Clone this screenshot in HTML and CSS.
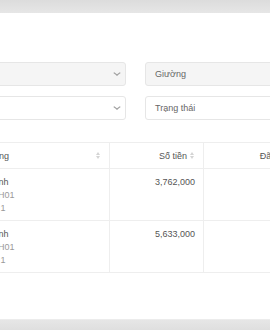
FILE: index.html
```html
<!DOCTYPE html>
<html>
<head>
<meta charset="utf-8">
<link rel="stylesheet" href="styles.css">
</head>
<body>
<div class="band top"></div>
<div class="card">
  <div class="wrap">
    <div class="filters">
      <div class="field select filled"><span class="val"></span><span class="chev"></span></div>
      <div class="field filled"><span class="ph">Giường</span></div>
      <div class="field select"><span class="val"></span><span class="chev"></span></div>
      <div class="field"><span class="ph">Trạng thái</span></div>
    </div>
    <table class="tbl">
      <colgroup><col class="c1"><col class="c2"><col class="c3"><col></colgroup>
      <thead>
        <tr>
          <th class="left"><div class="th-in"><span>Phòng</span><span class="sort"></span></div></th>
          <th class="right"><div class="th-in end"><span>Số tiền</span><span class="sort"></span></div></th>
          <th class="center">Đã thanh toán</th>
          <th></th>
        </tr>
      </thead>
      <tbody>
        <tr>
          <td class="left"><div class="main">Thanh</div><div class="sub">Mã H01</div><div class="sub">Lầu 1</div></td>
          <td class="right num">3,762,000</td>
          <td></td><td></td>
        </tr>
        <tr>
          <td class="left"><div class="main">Thanh</div><div class="sub">Mã H01</div><div class="sub">Lầu 1</div></td>
          <td class="right num">5,633,000</td>
          <td></td><td></td>
        </tr>
      </tbody>
    </table>
  </div>
</div>
<div class="band bottom"></div>
</body>
</html>
```
FILE: styles.css
```css
html, body {
  margin: 0;
  padding: 0;
  background: #e3e3e3;
  overflow: hidden;
  width: 270px;
  height: 330px;
  font-family: "Liberation Sans", Arial, sans-serif;
  font-size: 9px;
  color: #555;
}
.band.top {
  height: 13px;
  background: linear-gradient(#dcdcdc, #e6e6e6);
}
.card {
  background: #fff;
  height: 306px;
  overflow: hidden;
  box-shadow: 0 1px 2px rgba(0,0,0,0.04);
}
.band.bottom {
  height: 11px;
  background: linear-gradient(#e6e6e6, #dedede);
  border-top: 1px solid #ececec;
}
.wrap {
  margin-left: -26px;
  width: 470px;
  padding-top: 49px;
}
.filters {
  display: grid;
  grid-template-columns: 152px 1fr;
  column-gap: 19px;
  row-gap: 10px;
}
.field {
  height: 24px;
  box-sizing: border-box;
  border: 1px solid #e6e6e6;
  border-radius: 3px;
  background: #fff;
  display: flex;
  align-items: center;
  padding: 0 9px;
  position: relative;
}
.field.filled {
  background: #f5f5f5;
}
.ph {
  color: #666;
  font-size: 9px;
}
.select {
  justify-content: flex-end;
  padding-right: 6px;
}
.chev {
  width: 3px;
  height: 3px;
  border-right: 1px solid #a0a0a0;
  border-bottom: 1px solid #a0a0a0;
  transform: scaleX(1.3) rotate(45deg);
  margin-top: -2px;
}
.tbl {
  margin-top: 22px;
  border-collapse: collapse;
  table-layout: fixed;
  width: 470px;
}
.c1 { width: 135px; }
.c2 { width: 94px; }
.c3 { width: 169px; }
.tbl th, .tbl td {
  border: 1px solid #eeeeee;
  padding: 0 8px;
  font-weight: normal;
  vertical-align: top;
}
.tbl th {
  height: 25px;
  vertical-align: middle;
  color: #555;
}
.th-in {
  display: flex;
  align-items: center;
  justify-content: space-between;
}
.th-in.end {
  justify-content: flex-end;
  gap: 3px;
}
.sort {
  display: inline-flex;
  flex-direction: column;
  gap: 1px;
  width: 5px;
}
.sort::before, .sort::after {
  content: "";
  display: block;
  width: 0;
  height: 0;
  border-left: 2.5px solid transparent;
  border-right: 2.5px solid transparent;
}
.sort::before { border-bottom: 3px solid #d4d4d4; }
.sort::after { border-top: 3px solid #d4d4d4; }
.center { text-align: center; }
.right { text-align: right; }
.tbl td {
  height: 52px;
  box-sizing: border-box;
  padding-top: 7px;
  line-height: 13px;
}
.main { color: #555; }
.sub { color: #9a9a9a; }
.num { color: #555; }
```
